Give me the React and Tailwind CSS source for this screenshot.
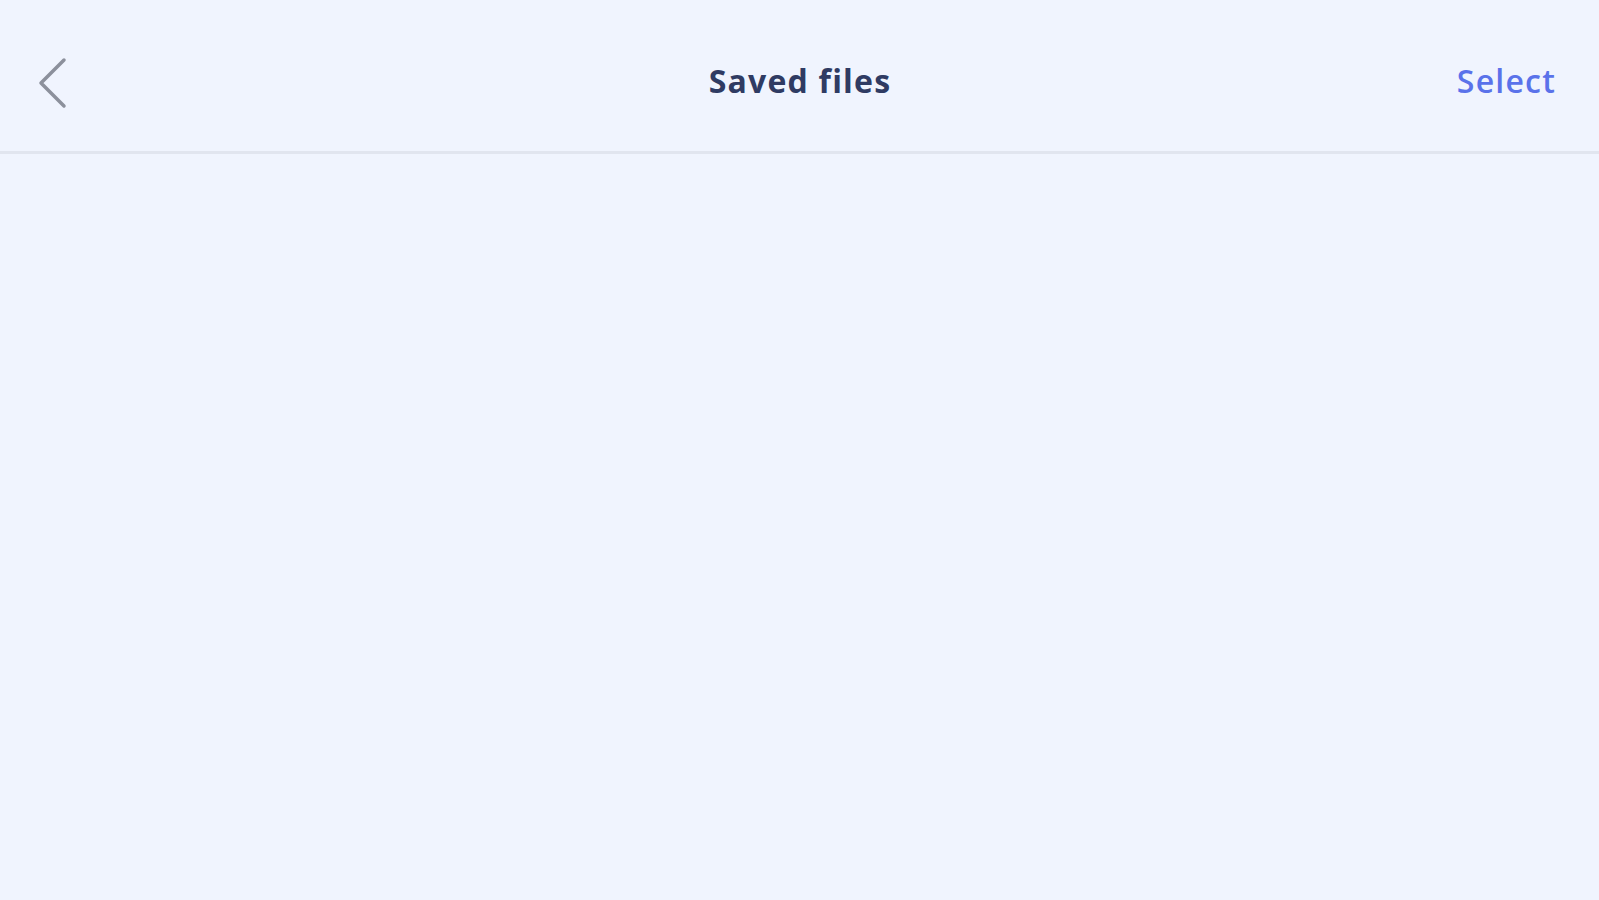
export default function App() {
  return (
    <div className="min-h-screen w-full bg-[#f0f4fe]" style={{ fontFamily: "'Open Sans', Lato, sans-serif" }}>
      <header className="flex h-[154px] items-center justify-between border-b-[3px] border-[#e1e5ef] pl-[38px] pr-[43px] pt-[10px]">
        <button type="button" className="flex w-[150px] items-center pt-[4px]">
          <svg width="29" height="52" viewBox="0 0 29 52" fill="none">
            <path d="M26 3 L3 26 L26 49" stroke="#8c909c" strokeWidth="3.5" strokeLinecap="round" strokeLinejoin="round" />
          </svg>
        </button>
        <h1 className="ml-[6px] text-[32px] font-bold tracking-[1.2px] text-[#2f3b63]">Saved files</h1>
        <button type="button" className="w-[150px] text-right text-[32px] font-semibold tracking-[1.2px] text-[#5a72ea]">
          Select
        </button>
      </header>
      <main className="flex-1" />
    </div>
  );
}
